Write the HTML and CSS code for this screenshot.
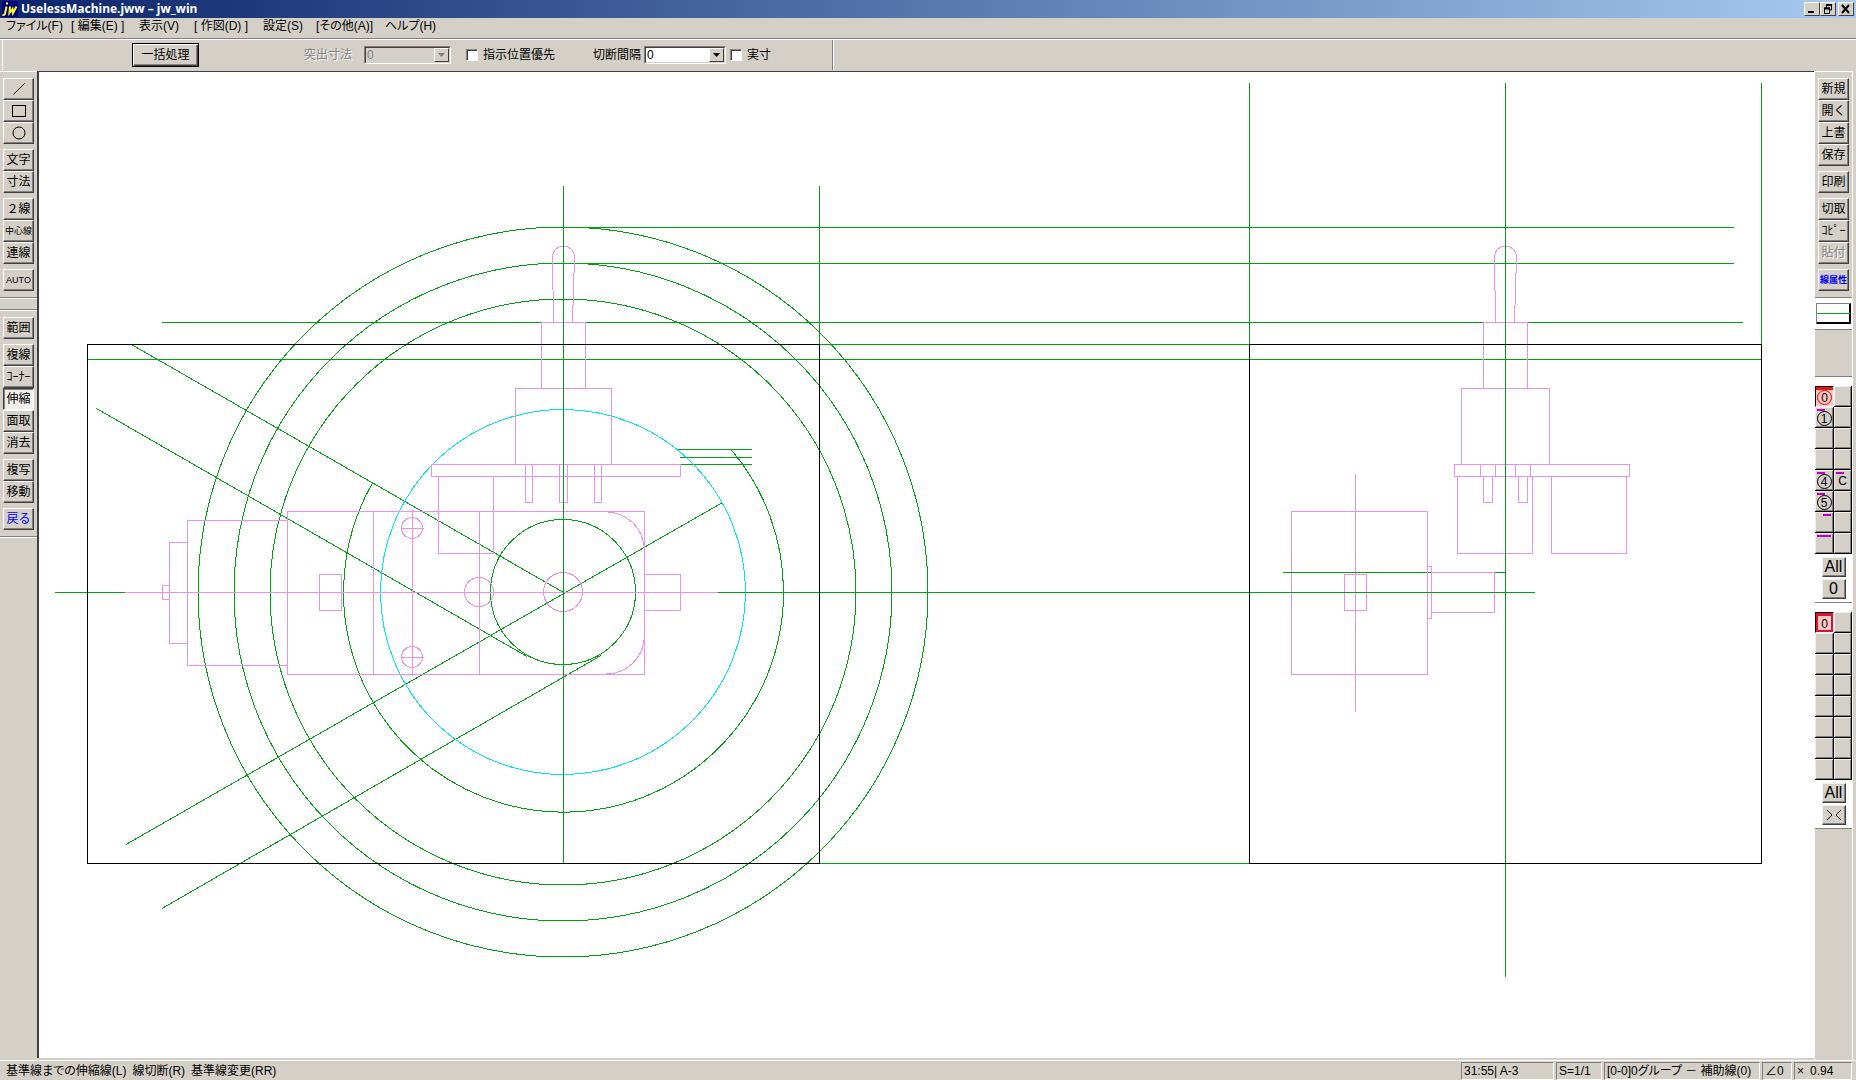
FILE: index.html
```html
<!DOCTYPE html>
<html lang="ja">
<head>
<meta charset="utf-8">
<title>UselessMachine.jww - jw_win</title>
<link rel="stylesheet" href="styles.css">
</head>
<body>
<header class="titlebar">
  <svg class="app-icon" width="16" height="16" viewBox="0 0 16 16" aria-hidden="true"><rect width="16" height="16" fill="#000080"/><path d="M4 2.500h2M4.500 5.500L3 12.500Q2.500 14.500 0.500 14M8 5.500L7.500 12L10.500 8L11 12L14.500 5.500" fill="none" stroke="#ffff20" stroke-width="2"/></svg>
  <h1 class="title">UselessMachine.jww – jw_win</h1>
  <div class="window-buttons">
    <button class="win-btn" aria-label="最小化"><svg width="12" height="10"><path d="M2 8h6" stroke="#000" stroke-width="2"/></svg></button>
    <button class="win-btn" aria-label="元に戻す"><svg width="12" height="10"><path d="M4 1h6M4.500 1v3M9.500 1v5H8M2 4h6M2.500 4v5.500h5V4" fill="none" stroke="#000"/><path d="M4 1h6M2 4.500h6" stroke="#000" stroke-width="2"/></svg></button>
    <button class="win-btn win-close" aria-label="閉じる"><svg width="12" height="10"><path d="M2 1l7 8M9 1l-7 8" stroke="#000" stroke-width="2"/></svg></button>
  </div>
</header>
<nav class="menubar">
  <button class="menu">ファイル(F)</button>
  <button class="menu">[ 編集(E) ]</button>
  <button class="menu">表示(V)</button>
  <button class="menu">[ 作図(D) ]</button>
  <button class="menu">設定(S)</button>
  <button class="menu">[その他(A)]</button>
  <button class="menu">ヘルプ(H)</button>
</nav>
<div class="controlbar">
  <div class="control-group">
    <button class="default-btn">一括処理</button>
    <label class="field off" for="protrude">突出寸法</label>
    <span class="combo combo-off">
      <select id="protrude" disabled><option>0</option></select>
      <span class="arrow"><svg width="7" height="4"><path d="M0 0h7L3.500 4z" fill="#808080"/></svg></span>
    </span>
    <label class="check check-first"><input type="checkbox">指示位置優先</label>
    <label class="field field-gap" for="gap">切断間隔</label>
    <span class="combo">
      <select id="gap"><option>0</option></select>
      <span class="arrow"><svg width="7" height="4"><path d="M0 0h7L3.500 4z" fill="#000"/></svg></span>
    </span>
    <label class="check check-second"><input type="checkbox">実寸</label>
  </div>
</div>
<main class="workspace">
  <aside class="side side-left">
    <div class="panel panel-top">
      <div class="tools">
        <button class="tool" aria-label="線"><svg width="16" height="16"><path d="M2.500 13.500l11-11" stroke="#000"/></svg></button>
        <button class="tool" aria-label="矩形"><svg width="16" height="16"><rect x="1.500" y="2.500" width="13" height="11" fill="none" stroke="#000"/></svg></button>
        <button class="tool" aria-label="円"><svg width="16" height="16"><circle cx="8" cy="8" r="6" fill="none" stroke="#000"/></svg></button>
      </div>
      <div class="tools"><button class="tool">文字</button><button class="tool">寸法</button></div>
      <div class="tools"><button class="tool">２線</button><button class="tool tight">中心線</button><button class="tool">連線</button></div>
      <div class="tools"><button class="tool tight">AUTO</button></div>
    </div>
    <div class="spacer"></div>
    <div class="panel">
      <div class="tools"><button class="tool">範囲</button></div>
      <div class="tools"><button class="tool">複線</button><button class="tool">ｺｰﾅｰ</button><button class="tool pressed" aria-pressed="true">伸縮</button><button class="tool">面取</button><button class="tool">消去</button></div>
      <div class="tools"><button class="tool">複写</button><button class="tool">移動</button></div>
      <div class="tools"><button class="tool blue">戻る</button></div>
    </div>
  </aside>

  <section class="canvas" aria-label="図面">
    <svg class="drawing" viewBox="39 72 1775 986">
      <g class="aux">
        <path d="M563.500 186V863M819.500 186V345M1249.500 83V345M1505.500 83V977M1761.500 83V345"/>
        <path d="M563 227.500H1734M563 263.500H1734M162 322.500H1743M819 344.500H1250M88 359.500H1761"/>
        <path d="M55 592.500H125M718 592.500H1535M1283 572.500H1506M819 863.500H1250"/>
        <path d="M677 449.500H752M680 457.500H752M680 464.500H752"/>
        <path d="M131.500 344.500L563.500 592.500M96.500 408.500L527 656.500M722.500 502.500L126 844.500M601 655.500L162 908.500"/>
        <circle cx="563" cy="592" r="365"/>
        <circle cx="563" cy="592" r="329"/>
        <circle cx="563" cy="592" r="293"/>
        <path d="M372.500 483A220 220 0 1 0 731 449.500"/>
        <circle cx="563" cy="592" r="72.500"/>
      </g>
      <circle class="travel" cx="563" cy="592" r="182.500"/>
      <g class="part">
        <path d="M125 592.500H718M373.500 511V675M412.500 510V676M479.500 511V675M401 528.500H424M401 657.500H424"/>
        <rect x="287.500" y="511.500" width="357" height="163"/>
        <rect x="187.500" y="520.500" width="100" height="145"/>
        <rect x="169.500" y="542.500" width="18" height="101"/>
        <rect x="162.500" y="585.500" width="7" height="14"/>
        <rect x="319.500" y="574.500" width="22" height="36"/>
        <rect x="644.500" y="574.500" width="36" height="36"/>
        <circle cx="412" cy="528" r="10.500"/>
        <circle cx="412" cy="657" r="10.500"/>
        <circle cx="479" cy="592" r="14.500"/>
        <circle cx="563" cy="592" r="19.500"/>
        <path d="M608 512A38 38 0 0 1 644 546M644 640A38 38 0 0 1 606 674"/>
        <rect x="431.500" y="464.500" width="249" height="12"/>
        <rect x="438.500" y="476.500" width="55" height="77"/>
        <path d="M525.500 464V502.500H532.500V464M559.500 464V502.500H567.500V464M594.500 464V502.500H601.500V464"/>
        <rect x="515.500" y="388.500" width="96" height="76"/>
        <rect x="541.500" y="322.500" width="44" height="66"/>
        <path d="M553.500 322L552.500 257A11 11 0 0 1 574.500 257L572.500 322"/>
      </g>
      <g class="part">
        <path d="M1495.500 322L1494.500 257A11 11 0 0 1 1516.500 257L1514.500 322"/>
        <rect x="1483.500" y="322.500" width="44" height="66"/>
        <rect x="1461.500" y="388.500" width="88" height="76"/>
        <rect x="1454.500" y="464.500" width="175" height="12"/>
        <path d="M1480.500 464V476M1495.500 464V476M1515.500 464V476M1530.500 464V476"/>
        <path d="M1483.500 476V502.500H1492.500V476M1518.500 476V502.500H1527.500V476"/>
        <rect x="1457.500" y="476.500" width="75" height="77"/>
        <rect x="1551.500" y="476.500" width="75" height="77"/>
        <rect x="1291.500" y="511.500" width="136" height="163"/>
        <path d="M1355.500 474V712"/>
        <rect x="1344.500" y="574.500" width="22" height="36"/>
        <rect x="1427.500" y="566.500" width="4" height="52"/>
        <rect x="1431.500" y="572.500" width="63" height="40"/>
      </g>
      <path class="aux" d="M563.500 186V863M1505.500 83V977M1283 572.500H1427M718 592.500H1535"/>
      <g class="outline">
        <rect x="87.500" y="344.500" width="732" height="519"/>
        <rect x="1249.500" y="344.500" width="512" height="519"/>
      </g>
    </svg>
  </section>

  <aside class="side side-right">
    <div class="panel panel-top">
      <div class="tools"><button class="tool">新規</button><button class="tool">開く</button><button class="tool">上書</button><button class="tool">保存</button></div>
      <div class="tools"><button class="tool">印刷</button></div>
      <div class="tools"><button class="tool">切取</button><button class="tool">ｺﾋﾟｰ</button><button class="tool" disabled>貼付</button></div>
      <div class="tools"><button class="tool blue bold tight">線属性</button></div>
    </div>
    <div class="line-sample"><button class="sample" aria-label="線種"><span class="sample-line"></span></button></div>
    <div class="panel blank"></div>
    <div class="layers">
      <div class="grid">
        <button class="cell current round"><span>0</span></button><button class="cell" aria-label="レイヤ8"></button>
        <button class="cell mark-left round"><span>1</span></button><button class="cell" aria-label="レイヤ9"></button>
        <button class="cell" aria-label="レイヤ2"></button><button class="cell" aria-label="レイヤA"></button>
        <button class="cell" aria-label="レイヤ3"></button><button class="cell" aria-label="レイヤB"></button>
        <button class="cell mark-left round"><span>4</span></button><button class="cell mark-left"><span>C</span></button>
        <button class="cell mark-left round"><span>5</span></button><button class="cell" aria-label="レイヤD"></button>
        <button class="cell mark-right" aria-label="レイヤ6"></button><button class="cell" aria-label="レイヤE"></button>
        <button class="cell mark-left mark-right" aria-label="レイヤ7"></button><button class="cell" aria-label="レイヤF"></button>
      </div>
      <div class="layer-actions"><button class="small-btn">All</button><button class="small-btn">0</button></div>
    </div>
    <div class="layers">
      <div class="grid">
        <button class="cell current boxed"><span>0</span></button><button class="cell" aria-label="グループ8"></button>
        <button class="cell" aria-label="グループ1"></button><button class="cell" aria-label="グループ9"></button>
        <button class="cell" aria-label="グループ2"></button><button class="cell" aria-label="グループA"></button>
        <button class="cell" aria-label="グループ3"></button><button class="cell" aria-label="グループB"></button>
        <button class="cell" aria-label="グループ4"></button><button class="cell" aria-label="グループC"></button>
        <button class="cell" aria-label="グループ5"></button><button class="cell" aria-label="グループD"></button>
        <button class="cell" aria-label="グループ6"></button><button class="cell" aria-label="グループE"></button>
        <button class="cell" aria-label="グループ7"></button><button class="cell" aria-label="グループF"></button>
      </div>
      <div class="layer-actions"><button class="small-btn">All</button><button class="small-btn" aria-label="切替"><svg width="16" height="12"><path d="M1 1l5 5-5 5M15 1l-5 5 5 5" fill="none" stroke="#000"/></svg></button></div>
    </div>
    <div class="rest"></div>
  </aside>
</main>
<footer class="statusbar">
  <p class="hint">基準線までの伸縮線(L)&ensp;線切断(R)&ensp;基準線変更(RR)</p>
  <button class="status s-paper">31:55| A-3</button>
  <button class="status s-scale">S=1/1</button>
  <button class="status s-layer">[0-0]0グループ － 補助線(0)</button>
  <button class="status s-angle">∠0</button>
  <button class="status s-zoom">×&ensp;0.94</button>
</footer>
</body>
</html>
```

FILE: styles.css
```css
:root {
  --face: #d4d0c8;
  --light: #ffffff;
  --shadow: #808080;
  --dark: #404040;
}

* { box-sizing: border-box; }

body {
  margin: 0;
  min-height: 100vh;
  display: flex;
  flex-direction: column;
  background: var(--face);
  color: #000;
  font: 12px/16px "Liberation Sans", "Noto Sans CJK JP", sans-serif;
  font-feature-settings: "palt";
}

button, select, input {
  margin: 0;
  padding: 0;
  font: inherit;
  font-feature-settings: inherit;
  color: inherit;
  border: 0;
  border-radius: 0;
  background: var(--face);
  white-space: nowrap;
}

svg { display: block; }

/* Title bar */
.titlebar {
  display: flex;
  align-items: center;
  height: 18px;
  padding: 0 2px;
  background: linear-gradient(to right, #0a246a, #a6caf0);
}
.title {
  flex: 1;
  margin: 0 0 0 3px;
  color: #fff;
  font: bold 12px/18px "Noto Sans", "Noto Sans CJK JP", sans-serif;
}
.window-buttons { display: flex; }
.win-btn {
  display: grid;
  place-items: center;
  width: 16px;
  height: 14px;
  border: 1px solid;
  border-color: var(--light) var(--dark) var(--dark) var(--light);
}
.win-close { margin-left: 2px; }

/* Menu */
.menubar {
  display: grid;
  grid-template-columns: 65px 68px 55px 69px 53px 69px auto;
  justify-content: start;
  align-items: start;
  height: 20px;
  padding-left: 6px;
}
.menu { line-height: 16px; text-align: left; }

/* Control bar */
.controlbar {
  height: 33px;
  border-top: 1px solid var(--shadow);
  box-shadow: inset 0 1px var(--light);
}
.control-group {
  display: flex;
  align-items: center;
  width: 831px;
  height: 30px;
  margin: 1px 0 0 2px;
  padding-left: 129px;
  border-left: 1px solid var(--light);
  border-right: 1px solid var(--shadow);
  box-shadow: 1px 0 var(--light);
}
.default-btn {
  width: 67px;
  height: 24px;
  border: 1px solid #000;
  box-shadow: inset 1px 1px var(--light), inset -1px -1px var(--dark), inset -2px -2px var(--shadow);
}
.field { margin-right: 3px; }
.field.off {
  margin: 0 12px 0 105px;
  color: var(--shadow);
  text-shadow: 1px 1px var(--light);
}
.field-gap { margin-left: 38px; }
.combo {
  position: relative;
  display: flex;
  width: 82px;
  height: 18px;
  border: 1px solid;
  border-color: var(--shadow) var(--light) var(--light) var(--shadow);
  box-shadow: inset 1px 1px var(--dark);
}
.combo select {
  appearance: none;
  width: 100%;
  padding: 0 18px 0 1px;
  line-height: 14px;
  background: #fff;
  border: 1px solid;
  border-color: var(--dark) var(--face) var(--face) var(--dark);
}
.combo-off { width: 87px; }
.combo-off select {
  background: var(--face);
  color: var(--shadow);
  opacity: 1;
}
.combo .arrow {
  position: absolute;
  top: 1px;
  right: 1px;
  display: grid;
  place-items: center;
  width: 15px;
  height: 14px;
  background: var(--face);
  border: 1px solid;
  border-color: var(--light) var(--dark) var(--dark) var(--light);
  pointer-events: none;
}
.check { display: flex; align-items: center; gap: 5px; }
.check-first { margin-left: 15px; }
.check-second { margin-left: 4px; }
.check input {
  appearance: none;
  width: 12px;
  height: 12px;
  background: #fff;
  border: 1px solid;
  border-color: var(--shadow) var(--light) var(--light) var(--shadow);
  box-shadow: inset 1px 1px var(--dark);
}
.check input:checked { background: #000; }

/* Work area */
.workspace { flex: 1; display: flex; }
.side { display: flex; flex-direction: column; }
.side-left { width: 37px; border-top: 1px solid var(--light); }
.side-right {
  width: 39px;
  margin-right: 3px;
  border-top: 1px solid var(--light);
  border-left: 1px solid var(--light);
  border-right: 1px solid var(--light);
}
.panel {
  display: flex;
  flex-direction: column;
  gap: 5px;
  padding: 7px 3px 6px;
  border-bottom: 1px solid var(--shadow);
  box-shadow: 0 1px var(--light);
}
.panel-top { padding-top: 6px; }
.spacer {
  height: 12px;
  border-bottom: 1px solid var(--shadow);
  box-shadow: 0 1px var(--light);
}
.tools { display: flex; flex-direction: column; font-feature-settings: normal; }
.tool {
  display: grid;
  place-items: center;
  width: 31px;
  height: 22px;
  border: 1px solid;
  border-color: var(--light) var(--dark) var(--dark) var(--light);
  box-shadow: inset -1px -1px var(--shadow);
}
.tool:disabled { color: var(--shadow); text-shadow: 1px 1px var(--light); }
.tool.tight { font-size: 9px; }
.pressed {
  background: #f0eeea;
  border-color: var(--dark) var(--light) var(--light) var(--dark);
  box-shadow: inset 1px 1px var(--shadow);
}
.blue { color: #0000ff; }
.bold { font-weight: bold; }

/* Drawing */
.canvas {
  flex: 1;
  min-width: 0;
  margin-bottom: 2px;
  background: #fff;
  border-top: 1px solid var(--dark);
  border-left: 2px solid var(--dark);
}
.drawing { width: 100%; height: auto; fill: none; shape-rendering: crispEdges; }
.aux { stroke: #00a010; }
.part { stroke: #ec90ec; }
.travel { stroke: #00e4ec; }
.outline { stroke: #000; }

/* Right column */
.line-sample { padding: 5px 1px; background: #fff; border-bottom: 1px solid var(--shadow); }
.sample {
  display: grid;
  align-items: center;
  width: 100%;
  height: 21px;
  background: #fff;
  border: 1px solid;
  border-color: var(--shadow) #000 #000 var(--shadow);
  box-shadow: inset -1px -1px #000;
}
.sample-line { height: 1px; background: #00b020; }
.blank { height: 47px; }
.layers {
  padding-top: 9px;
  background: #fff;
  border-bottom: 1px solid var(--shadow);
}
.grid { display: grid; grid-template-columns: 19px 18px; grid-auto-rows: 21px; }
.cell {
  position: relative;
  display: grid;
  place-items: center;
  padding-top: 2px;
  border-right: 1px solid #000;
  border-bottom: 1px solid #000;
  box-shadow: inset 1px 1px #f0eeea, inset -1px -1px var(--shadow);
}
.mark-left::before, .mark-right::after {
  content: "";
  position: absolute;
  top: 2px;
  width: 8px;
  height: 2px;
  background: #c000c0;
}
.mark-left::before { left: 2px; }
.mark-right::after { right: 2px; }
.round span {
  width: 15px;
  height: 15px;
  line-height: 14px;
  border: 1px solid #000;
  border-radius: 50%;
}
.current {
  background: #ffc8c0;
  border: 1px solid #000;
  border-right-color: #fff;
  border-bottom-color: #fff;
  box-shadow: inset 0 3px #e81010;
}
.current.round span { border-color: #e00000; }
.boxed { box-shadow: inset 0 3px #e01030, inset 0 0 0 2px #e01030; }
.layer-actions {
  display: flex;
  flex-direction: column;
  align-items: center;
  gap: 2px;
  padding: 3px 0;
}
.small-btn {
  display: grid;
  place-items: center;
  width: 24px;
  height: 20px;
  font-size: 16px;
  border: 1px solid;
  border-color: #f0eeea var(--dark) var(--dark) #f0eeea;
  box-shadow: inset -1px -1px var(--shadow);
}
.rest { flex: 1; }

/* Status bar */
.statusbar {
  display: flex;
  align-items: center;
  gap: 2px;
  height: 20px;
  padding: 1px 4px 0 6px;
  border-top: 1px solid var(--light);
}
.hint { flex: 1; margin: 0; white-space: nowrap; }
.status {
  height: 18px;
  padding-left: 2px;
  text-align: left;
  border: 1px solid;
  border-color: var(--shadow) var(--light) var(--light) var(--shadow);
}
.s-paper { width: 93px; }
.s-scale { width: 46px; }
.s-layer { width: 156px; }
.s-angle { width: 30px; }
.s-zoom { width: 58px; }
```
